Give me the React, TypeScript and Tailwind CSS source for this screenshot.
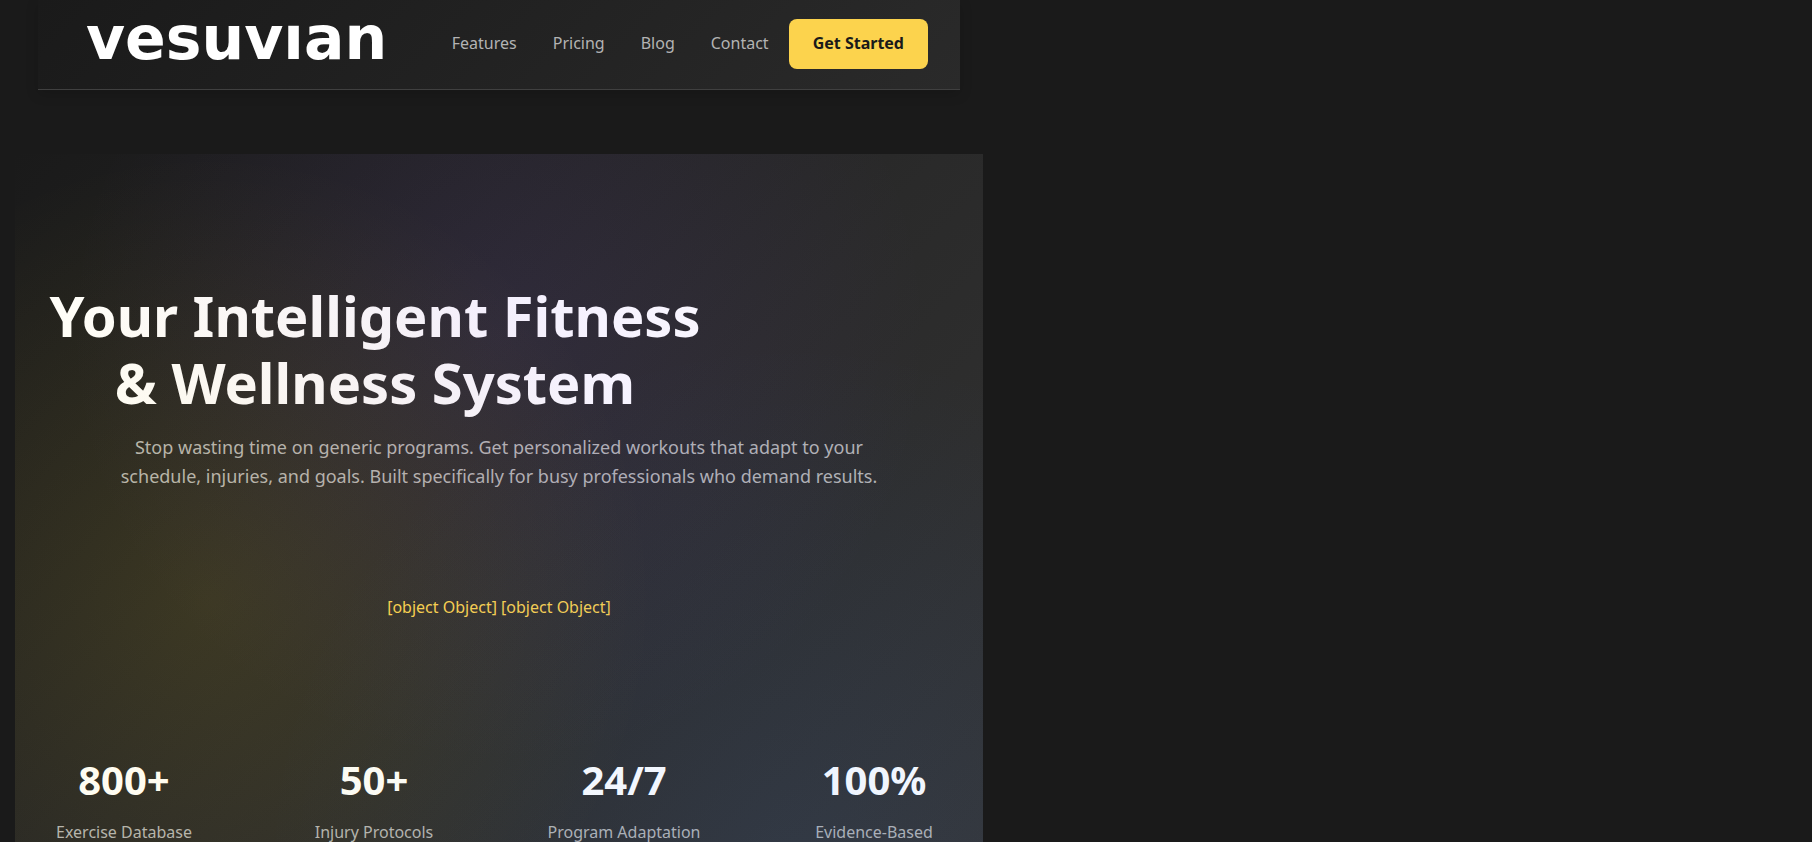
const NAV_LINKS = [
  { label: 'Features', href: '#features' },
  { label: 'Pricing', href: '#pricing' },
  { label: 'Blog', href: '#blog' },
  { label: 'Contact', href: '#contact' },
];

const STATS = [
  { value: '800+', label: 'Exercise Database' },
  { value: '50+', label: 'Injury Protocols' },
  { value: '24/7', label: 'Program Adaptation' },
  { value: '100%', label: 'Evidence-Based' },
];

function Navbar() {
  return (
    <header className="mx-[23px] flex items-start justify-between border-b border-[#404040] bg-linear-135 from-[#1a1a1a] to-[#2a2a2a] pt-[19px] pr-8 pb-5 pl-12 shadow-[0_4px_12px_rgba(0,0,0,0.15)]">
      <a
        href="#"
        aria-label="vesuvian"
        className="font-['DejaVu_Sans',sans-serif] text-[60px] leading-[38px] font-bold text-white"
      >
        vesuvıan
      </a>
      <nav className="flex items-center gap-5 leading-[25px]">
        <ul className="flex items-center gap-9 pb-0.5">
          {NAV_LINKS.map((link) => (
            <li key={link.label}>
              <a href={link.href} className="text-[#b3b3b3] hover:text-white">
                {link.label}
              </a>
            </li>
          ))}
        </ul>
        <button
          type="button"
          className="h-[50px] rounded-lg bg-[#fcd34d] px-6 pb-px font-bold text-[#1a1a1a]"
        >
          Get Started
        </button>
      </nav>
    </header>
  );
}

function Hero() {
  return (
    <section className="relative mt-16 min-h-[892px] bg-linear-135 from-[#1a1a1a] via-[#2a2a2a] to-[#363636] px-6 pt-32 text-center">
      <h1 className="max-w-[672px] text-[56px] leading-[67px] font-bold text-white">
        Your Intelligent Fitness &amp; Wellness System
      </h1>
      <p className="mx-auto mt-[17px] max-w-[768px] text-lg leading-[29px] text-[#b3b3b3]">
        Stop wasting time on generic programs. Get personalized workouts that adapt to your
        schedule, injuries, and goals. Built specifically for busy professionals who demand results.
      </p>
      <p className="mt-[104px] text-[#fcd34d]">[object Object] [object Object]</p>
      <dl className="mt-[129px] grid grid-cols-4 gap-20">
        {STATS.map((stat) => (
          <div key={stat.label} className="flex flex-col-reverse gap-2">
            <dt className="whitespace-nowrap text-[#b3b3b3]">{stat.label}</dt>
            <dd className="text-[40px] leading-[64px] font-bold text-white">{stat.value}</dd>
          </div>
        ))}
      </dl>
      {/* colour glow, tints the copy as well */}
      <div className="pointer-events-none absolute inset-0 bg-[radial-gradient(circle_at_20%_50%,rgba(250,214,21,0.11)_0%,transparent_50%),radial-gradient(circle_at_80%_80%,rgba(59,130,246,0.1)_0%,transparent_50%),radial-gradient(circle_at_50%_20%,rgba(139,92,246,0.1)_0%,transparent_50%)]" />
    </section>
  );
}

export default function App() {
  return (
    <div className="h-screen overflow-x-hidden overflow-y-auto bg-[#1a1a1a] font-['Noto_Sans',sans-serif] text-base [scrollbar-width:none]">
      <div className="ml-[15px] max-w-[968px]">
        <Navbar />
        <Hero />
      </div>
    </div>
  );
}
